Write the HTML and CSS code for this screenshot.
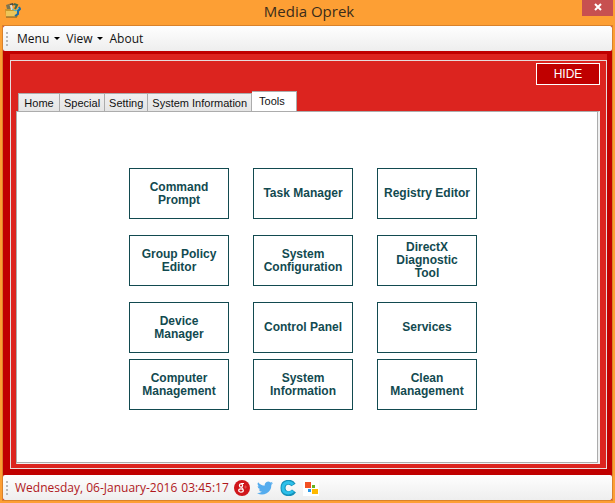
FILE: index.html
```html
<!DOCTYPE html>
<html lang="en">
<head>
    <meta charset="UTF-8">
    <meta name="viewport" content="width=device-width, initial-scale=1.0">
    <title>Media Oprek</title>
    <link rel="stylesheet" href="styles.css">
</head>
<body>
    <header class="titlebar">
        <svg class="app-icon" width="16" height="16" viewBox="0 0 16 16">
            <path d="M1 3l3-1 2 5H2z" fill="#7b7452"/>
            <path d="M4 2l4-1 1 2-3 1z" fill="#4d4a3c"/>
            <path d="M6 3l1 5" stroke="#d7dcd8" stroke-width="2"/>
            <path d="M9 2l3 1-2 4" fill="none" stroke="#3d6a52" stroke-width="2"/>
            <path d="M0 7h5l1 1h7v7H1z" fill="#c9962c"/>
            <path d="M1 9h11l-1 6H1z" fill="#edc65a"/>
            <path d="M1 15h11" stroke="#75571c"/>
            <path d="M14 5l1 2-2 2v3l-3 2" fill="none" stroke="#1c6ca8" stroke-width="2"/>
            <path d="M7 7l4 2 3-3" fill="none" stroke="#42bfd8"/>
        </svg>
        <h1>Media Oprek</h1>
        <button type="button" class="close" aria-label="Close">
            <svg width="8" height="8" viewBox="0 0 8 8"><path d="M1 1l6 6M7 1L1 7" stroke="#fff" stroke-width="2"/></svg>
        </button>
    </header>

    <div class="window">
        <nav class="toolbar menubar">
            <span class="grip"></span>
            <button type="button" class="menu-item">Menu<span class="arrow"></span></button>
            <button type="button" class="menu-item">View<span class="arrow"></span></button>
            <button type="button" class="menu-item">About</button>
        </nav>

        <main class="client">
            <div class="panel">
                <div class="panel-top">
                    <button type="button" class="hide">HIDE</button>
                </div>
                <div class="tabs" role="tablist">
                    <button type="button" class="tab" role="tab">Home</button>
                    <button type="button" class="tab" role="tab">Special</button>
                    <button type="button" class="tab" role="tab">Setting</button>
                    <button type="button" class="tab" role="tab">System Information</button>
                    <button type="button" class="tab active" role="tab" aria-selected="true">Tools</button>
                </div>
                <section class="page">
                    <div class="tools">
                        <button type="button" class="tool">Command Prompt</button>
                        <button type="button" class="tool">Task Manager</button>
                        <button type="button" class="tool">Registry Editor</button>
                        <button type="button" class="tool">Group Policy Editor</button>
                        <button type="button" class="tool">System Configuration</button>
                        <button type="button" class="tool">DirectX Diagnostic Tool</button>
                        <button type="button" class="tool">Device Manager</button>
                        <button type="button" class="tool">Control Panel</button>
                        <button type="button" class="tool">Services</button>
                    </div>
                    <div class="tools">
                        <button type="button" class="tool">Computer Management</button>
                        <button type="button" class="tool">System Information</button>
                        <button type="button" class="tool">Clean Management</button>
                    </div>
                </section>
            </div>
        </main>

        <footer class="toolbar statusbar">
            <span class="grip"></span>
            <span class="date">Wednesday, 06-January-2016</span>
            <span class="time">03:45:17</span>
            <a href="#" class="link" aria-label="Google Plus">
                <svg width="16" height="16" viewBox="0 0 16 16">
                    <circle cx="8" cy="8" r="8" fill="#d0161b"/>
                    <circle cx="7" cy="5.500" r="1.600" fill="none" stroke="#fff" stroke-width="1.200"/>
                    <path d="M7 3.500h3M7.500 7l1.500 2" fill="none" stroke="#fff"/>
                    <ellipse cx="7" cy="10.500" rx="2.300" ry="1.600" fill="none" stroke="#fff" stroke-width="1.200"/>
                    <path d="M10 7h3M11.500 5.500v3" stroke="#dc4a4a"/>
                </svg>
            </a>
            <a href="#" class="link" aria-label="Twitter">
                <svg width="16" height="16" viewBox="0 0 24 24">
                    <path fill="#55acee" d="M24 4.600a10 10 0 0 1-2.800.8 5 5 0 0 0 2.100-2.700 10 10 0 0 1-3.100 1.200 4.900 4.900 0 0 0-8.400 4.500A14 14 0 0 1 1.700 3.200a4.900 4.900 0 0 0 1.500 6.500 4.900 4.900 0 0 1-2.200-.6 4.900 4.900 0 0 0 3.900 4.900 5 5 0 0 1-2.200.1 4.900 4.900 0 0 0 4.600 3.400A9.900 9.900 0 0 1 0 19.500 14 14 0 0 0 21.500 7.100 10 10 0 0 0 24 4.600z"/>
                </svg>
            </a>
            <a href="#" class="link" aria-label="Website">
                <svg width="16" height="16" viewBox="0 0 16 16">
                    <path d="M13.500 5C11 1 3 1 3 8s8 7 11 3" fill="none" stroke="#1590b8" stroke-width="5"/>
                    <path d="M13 4.500C10 1 3 2 3 8s7 6 10 3" fill="none" stroke="#2cc0ea" stroke-width="3"/>
                </svg>
            </a>
            <a href="#" class="link" aria-label="Store">
                <svg width="16" height="16" viewBox="0 0 16 16">
                    <path fill="#fff" d="M0 0h16v16H0z"/>
                    <path fill="#f25022" d="M2 2h6v6H2z"/>
                    <path fill="#66b421" d="M9 5h3v3H9z"/>
                    <path fill="#2a9bea" d="M5 9h3v3H5z"/>
                    <path fill="#ffb900" d="M9 9h6v5H9z"/>
                </svg>
            </a>
        </footer>
    </div>
</body>
</html>
```
FILE: styles.css
```css
* {
    margin: 0;
    padding: 0;
    box-sizing: border-box;
}

body {
    display: flex;
    flex-direction: column;
    min-height: 100vh;
    padding: 0 2px 2px;
    background: #fd9f34;
    font-family: "Open Sans", "Noto Sans", sans-serif;
    font-size: 12px;
    color: #111;
}

button {
    border: none;
    background: none;
    font: inherit;
    color: inherit;
}

.titlebar {
    display: grid;
    grid-template-columns: 1fr auto 1fr;
    height: 25px;
    padding-left: 3px;
}

.app-icon {
    margin-top: 2px;
}

h1 {
    font-size: 15px;
    font-weight: 400;
    line-height: 22px;
    color: #3a2c1a;
}

.close {
    display: flex;
    align-items: center;
    justify-content: center;
    justify-self: end;
    width: 31px;
    height: 16px;
    padding-bottom: 3px;
    background: #c75050;
}

.window {
    flex: 1;
    display: flex;
    flex-direction: column;
    border: 1px solid #d9822b;
    background: #c00000;
}

.toolbar {
    display: flex;
    align-items: center;
    height: 25px;
    padding-left: 3px;
    border-radius: 2px;
    background: linear-gradient(#fefefe, #eee);
}

.grip {
    width: 2px;
    height: 14px;
    margin-right: 7px;
    background: repeating-linear-gradient(#b8b8b8 0 2px, transparent 2px 4px);
}

.menu-item {
    display: flex;
    align-items: center;
    padding: 0 4px 0 2px;
    line-height: 24px;
}

.arrow {
    margin-left: 5px;
    border: 3px solid transparent;
    border-top-color: #000;
    border-bottom: none;
}

.client {
    flex: 1;
    display: flex;
    padding: 3px 5px 6px 7px;
}

/* The red strip above the outlined panel has no outline of its own */
.client::before {
    content: "";
    width: 100%;
    height: 6px;
    margin-right: -100%;
    background: #dc241f;
}

.panel {
    flex: 1;
    display: flex;
    flex-direction: column;
    margin-top: 6px;
    padding: 0 6px 4px 5px;
    border: 1px solid #e6dcdc;
    background: #dc241f;
}

.panel-top {
    display: flex;
    justify-content: flex-end;
    height: 30px;
    padding-top: 2px;
}

.hide {
    width: 64px;
    height: 22px;
    border: 1px solid #fff;
    background: #c00000;
    color: #fff;
    font-family: "Liberation Sans", Arial, sans-serif;
}

.tabs {
    display: flex;
    align-items: flex-end;
    height: 20px;
    padding-left: 2px;
    font-family: "Liberation Sans", Arial, sans-serif;
    font-size: 11px;
}

.tab {
    min-width: 42px;
    height: 18px;
    padding: 0 4px;
    border: 1px solid #acacac;
    border-width: 1px 1px 0 0;
    background: linear-gradient(#f0f0f0, #e5e5e5);
}

.tab:first-child {
    border-left-width: 1px;
}

.tab.active {
    height: 21px;
    margin-bottom: -1px;
    padding: 0 11px 2px 7px;
    background: #fff;
}

.page {
    flex: 1;
    display: flex;
    flex-direction: column;
    align-items: center;
    gap: 6px;
    padding: 56px 9px 48px 0;
    border: 1px solid #acacac;
    border-right: 2px solid #f0f0f0;
    border-bottom-color: #f0f0f0;
    background: #fff;
    box-shadow: inset -1px -1px #acacac;
}

.tools {
    display: grid;
    grid-template-columns: repeat(3, 100px);
    gap: 16px 24px;
}

.tool {
    height: 51px;
    padding: 0 6px;
    border: 1px solid #124a50;
    background: #fff;
    color: #124a50;
    font-family: "Liberation Sans", Arial, sans-serif;
    font-size: 12px;
    font-weight: 700;
    line-height: 13px;
}

.statusbar {
    color: #b0181c;
}

.time {
    margin: 0 5px 0 4px;
}

.link {
    display: flex;
    margin-right: 7px;
}
```
